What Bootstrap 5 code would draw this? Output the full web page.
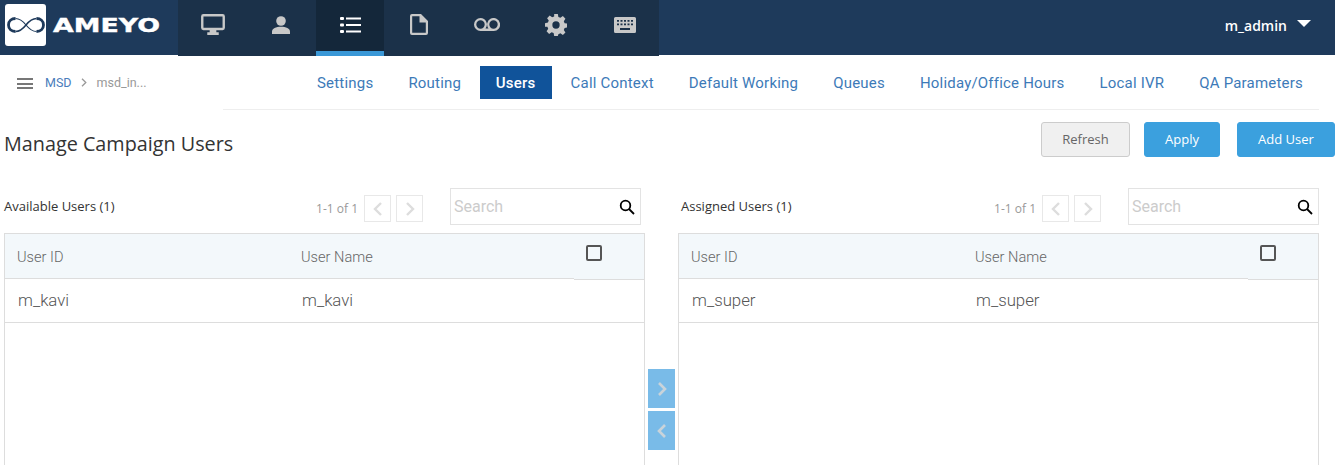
<!DOCTYPE html>
<html lang="en"><head><meta charset="utf-8"><title>Manage Campaign Users</title>
<link href="https://cdn.jsdelivr.net/npm/bootstrap@5.3.0/dist/css/bootstrap.min.css" rel="stylesheet">
<style>
html,body{height:465px;overflow:hidden;background:#fff}
body{font-family:"Open Sans",sans-serif;color:#333}
.topbar{height:55px;background:#1e3a5b;position:relative}
.brand-zone{width:178.3px;padding:4px 0 0 5px;gap:7px}
.logo-tile{width:41px;height:42px;background:#fff;border-radius:3px}
.logo-word{font:700 20px/1 "DejaVu Sans",sans-serif;color:#fff;transform:scaleX(1.34);transform-origin:0 50%;-webkit-text-stroke:.4px #fff;margin-top:-1px}
.icon-strip{height:56px;background:#1b3149;position:relative;z-index:2}
.strip-tab{width:68.71px;height:56px;padding-bottom:7px}
.strip-tab svg{fill:#c8c8c8}
.strip-on{background:#14273a;border-bottom:5px solid #3a98d7;padding-bottom:2px}
.strip-on svg{fill:#fff}
.who{margin-left:auto;padding-right:24px;color:#fff;font-size:14px;font-weight:600;gap:10px;padding-bottom:4px}
.who-caret{width:0;height:0;border:7px solid transparent;border-top:7px solid #fff;border-bottom:0;margin-bottom:5px}
.subbar{height:55px}
.crumbs{flex:0 0 223px;padding-left:17px;font:400 12.5px Roboto,sans-serif}
.crumb-burger{width:16px;height:11px;border-top:2px solid #777;border-bottom:2px solid #777;position:relative;margin-right:12px;margin-top:2px}
.crumb-burger::after{content:"";position:absolute;left:0;right:0;top:2.5px;height:2px;background:#777}
.crumb-a{color:#4a7dbb}.crumb-b{color:#999}
.crumb-sep{margin:0 10px 0 9px}
.tabline{flex:1;min-width:0;margin-right:16px;height:55px;border-bottom:1px solid #eee;padding:0 0 0 76.500px}
.tab-link{flex:none;font:400 15px Roboto,sans-serif;letter-spacing:.2px;color:#3d7ab8;padding:0 17.500px;height:33px;line-height:35px;text-decoration:none;white-space:nowrap}
.tab-link.tab-on{background:#10539a;color:#fff;font-weight:500;width:72px;text-align:center;padding:0;margin:0 1.500px 0 1px}
.headrow{height:78px;padding:12px 0 0 4px}
.page-title{font:400 19.800px "Open Sans",sans-serif;color:#333;margin:0;padding-top:8px}
.act{font:400 13px/1 "Open Sans",sans-serif;height:35px;padding:0;border-radius:3px}
.act-grey{width:89px;background:#f0f0f0;border:1px solid #ccc;color:#666;margin-right:14px}
.act-blue{background:#3ba0de;border:1px solid #3ba0de;color:#fff}
.act-apply{width:76px;margin-right:17px}.act-add{width:98px}
.work{padding-left:4px}
.pane-l{width:641px}.pane-r{width:641px}
.pane-mid{width:33px;padding:181px 0 0 3px}
.shift-btn{width:27px;height:39px;background:#79bbe8;margin-bottom:3px;border:0;padding:0;display:flex;align-items:center;justify-content:center}
.pane-top{height:45px;position:relative}
.pane-label{font-size:13px;color:#333;margin-top:9px;white-space:nowrap}
.label-right{padding-left:3px}
.pager{margin:7px 27px 0 auto}
.pager-count{font-size:12px;color:#999;margin-right:6px}
.page-box{width:27px;height:27px;border:1px solid #e8e8e8;background:#fff;padding:0;display:flex;align-items:center;justify-content:center}
.page-next{margin-left:5px}
.search-box{width:191px;height:37px;border:1px solid #e3e3e3;padding:0 4px 0 3px}
.search-box svg{margin-right:1px}
.search-left{margin-right:4px}
.search-box input{border:0;outline:0;flex:1;min-width:0;font:400 16px Roboto,sans-serif;padding:0;background:transparent}
.search-box input::placeholder{color:#ccc;opacity:1}
.grid-wrap{border:1px solid #ddd;border-bottom:0;height:300px}
.user-table{width:100%;table-layout:fixed;border-collapse:collapse;margin:0}
.user-table th{height:44px;background:#f3f8fb;font:300 14.600px Roboto,sans-serif;color:#666;padding:2px 0 0 12px;border-bottom:1px solid #ddd}
.user-table th:last-child{border-bottom-color:#f3f8fb}
.user-table td{height:44px;font:300 16.800px Roboto,sans-serif;color:#555;padding:0 0 0 13px;border-bottom:1px solid #ddd}
.user-table td:last-child{box-shadow:inset 0 1px 0 #ddd}
.box-mark{width:16px;height:16px;border:2px solid #555;border-radius:2px;display:block;margin:-7px 0 0 0}
</style></head>
<body>
<div class="topbar d-flex align-items-start">
  <div class="brand-zone d-flex">
    <div class="logo-tile d-flex align-items-center justify-content-center">
      <svg width="38" height="18" viewBox="0 0 38 18" fill="none" stroke="#1e3a5b"><path stroke-width="2.800" d="M8.500 2.500C4.500 2.500 1.500 5 1.500 9C1.500 13 4.500 15.500 8.500 15.500"/><path stroke-width="1.600" d="M8.500 15.500C12 15.500 15 14 19 9C23 4 26 2.500 29.500 2.500"/><path stroke-width="2.800" d="M29.500 2.500C33.500 2.500 36.500 5 36.500 9C36.500 13 33.500 15.500 29.500 15.500"/><path stroke-width="1.200" d="M29.500 15.500C26 15.500 23 14 19 9C15 4 12 2.500 8.500 2.500"/></svg>
    </div>
    <div class="logo-word align-self-center">AMEYO</div>
  </div>
  <div class="icon-strip d-flex">
    <div class="strip-tab d-flex align-items-center justify-content-center"><svg width="24" height="21" viewBox="0 0 25 22"><path fill-rule="evenodd" d="M2.500 0h20A2.500 2.500 0 0 1 25 2.500v12a2.500 2.500 0 0 1-2.500 2.500H16v2h2.500v3h-12v-3H9v-2H2.500A2.500 2.500 0 0 1 0 14.500v-12A2.500 2.500 0 0 1 2.500 0zM2.500 2.500v12h20v-12z"/></svg></div>
    <div class="strip-tab d-flex align-items-center justify-content-center"><svg width="18" height="18" viewBox="0 0 18 18"><circle cx="9" cy="5" r="4.800"/><path d="M0 18v-2.500C0 12.500 4 10.800 9 10.800s9 1.700 9 4.700V18z"/></svg></div>
    <div class="strip-tab strip-on d-flex align-items-center justify-content-center"><svg width="21" height="16" viewBox="0 0 21 16"><rect x="0" y="0" width="4" height="3" rx="1"/><rect x="0" y="6.500" width="4" height="3" rx="1"/><rect x="0" y="13" width="4" height="3" rx="1"/><rect x="6" y=".5" width="15" height="2"/><rect x="6" y="7" width="15" height="2"/><rect x="6" y="13.500" width="15" height="2"/></svg></div>
    <div class="strip-tab d-flex align-items-center justify-content-center"><svg width="18" height="21" viewBox="0 0 18 21"><path fill-rule="evenodd" d="M2 0h9l7 7v12a2 2 0 0 1-2 2H2a2 2 0 0 1-2-2V2a2 2 0 0 1 2-2zM2.200 2.200v16.600h13.600V8.500H9.500V2.200z"/></svg></div>
    <div class="strip-tab d-flex align-items-center justify-content-center"><svg width="26" height="13" viewBox="0 0 26 13"><path fill-rule="evenodd" d="M6.500 0a6.500 6.500 0 0 1 5 10.500h3A6.500 6.500 0 1 1 19.500 13h-13a6.500 6.500 0 0 1 0-13zM6.500 2.300a4.200 4.200 0 1 0 0 8.400 4.200 4.200 0 0 0 0-8.400zM19.500 2.300a4.200 4.200 0 1 0 0 8.400 4.200 4.200 0 0 0 0-8.400z"/></svg></div>
    <div class="strip-tab d-flex align-items-center justify-content-center"><svg width="22" height="22" viewBox="0 0 24 24"><path fill-rule="evenodd" d="M10 0h4l.6 3.200 2.200.9L19.500 2.300l2.800 2.800-1.800 2.700.9 2.200 3.200.6v4l-3.200.6-.9 2.200 1.800 2.700-2.800 2.800-2.700-1.800-2.200.9L14 24h-4l-.6-3.200-2.200-.9-2.700 1.800-2.800-2.800 1.800-2.700-.9-2.200L0 14v-4l3.200-.6.9-2.200L2.300 4.500 5.100 1.700l2.700 1.800 2.200-.9zM12 8a4 4 0 1 0 0 8 4 4 0 0 0 0-8z"/></svg></div>
    <div class="strip-tab d-flex align-items-center justify-content-center"><svg width="22" height="16" viewBox="0 0 22 16"><path fill-rule="evenodd" d="M1.500 0h19A1.500 1.500 0 0 1 22 1.500v13a1.500 1.500 0 0 1-1.500 1.500h-19A1.500 1.500 0 0 1 0 14.500v-13A1.500 1.500 0 0 1 1.500 0zM3 3v1.700h2V3zM6.500 3v1.700h2V3zM10 3v1.700h2V3zM13.500 3v1.700h2V3zM17 3v1.700h2V3zM3 6.500v1.700h2V6.500zM6.500 6.500v1.700h2V6.500zM10 6.500v1.700h2V6.500zM13.500 6.500v1.700h2V6.500zM17 6.500v1.700h2V6.500zM6 11v2h10v-2z"/></svg></div>
  </div>
  <div class="who d-flex align-items-center h-100"><span>m_admin</span><span class="who-caret"></span></div>
</div>

<div class="subbar d-flex">
  <div class="crumbs d-flex align-items-center">
    <span class="crumb-burger"></span><span class="crumb-a">MSD</span>
    <svg class="crumb-sep" width="6" height="9" viewBox="0 0 6 9" fill="none" stroke="#999" stroke-width="1.300"><path d="M1 .8 4.800 4.500 1 8.200"/></svg>
    <span class="crumb-b">msd_in...</span>
  </div>
  <div class="tabline d-flex align-items-center">
    <a class="tab-link" href="#">Settings</a>
    <a class="tab-link" href="#">Routing</a>
    <a class="tab-link tab-on" href="#">Users</a>
    <a class="tab-link" href="#">Call Context</a>
    <a class="tab-link" href="#">Default Working</a>
    <a class="tab-link" href="#">Queues</a>
    <a class="tab-link" href="#">Holiday/Office Hours</a>
    <a class="tab-link" href="#">Local IVR</a>
    <a class="tab-link" href="#">QA Parameters</a>
  </div>
</div>

<div class="headrow d-flex justify-content-between align-items-start">
  <h1 class="page-title">Manage Campaign Users</h1>
  <div class="d-flex">
    <button class="btn act act-grey">Refresh</button>
    <button class="btn act act-blue act-apply">Apply</button>
    <button class="btn act act-blue act-add">Add User</button>
  </div>
</div>

<div class="work d-flex">
  <div class="pane-l">
    <div class="pane-top d-flex align-items-start">
      <span class="pane-label">Available Users (1)</span>
      <div class="pager d-flex align-items-center">
        <span class="pager-count">1-1 of 1</span>
        <span class="page-box"><svg width="10" height="14" viewBox="0 0 10 14" fill="none" stroke="#ddd" stroke-width="2.400"><path d="M8 1 2 7l6 6"/></svg></span>
        <span class="page-box page-next"><svg width="10" height="14" viewBox="0 0 10 14" fill="none" stroke="#ddd" stroke-width="2.400"><path d="m2 1 6 6-6 6"/></svg></span>
      </div>
      <div class="search-box search-left d-flex align-items-center"><input type="text" placeholder="Search" aria-label="Search"><svg width="16" height="16" viewBox="0 0 16 16" fill="none" stroke="#000" stroke-width="1.800"><circle cx="6.500" cy="6.500" r="4.800"/><path d="m10 10 5 5"/></svg></div>
    </div>
    <div class="grid-wrap">
      <table class="user-table"><colgroup><col style="width:284px"><col style="width:285px"><col></colgroup>
        <thead><tr><th>User ID</th><th>User Name</th><th><span class="box-mark"></span></th></tr></thead>
        <tbody><tr><td>m_kavi</td><td>m_kavi</td><td></td></tr></tbody>
      </table>
    </div>
  </div>
  <div class="pane-mid">
    <button class="shift-btn" aria-label="Assign"><svg width="10" height="14" viewBox="0 0 10 14" fill="none" stroke="#c9d3da" stroke-width="2.600"><path d="m2 1 6 6-6 6"/></svg></button>
    <button class="shift-btn" aria-label="Remove"><svg width="10" height="14" viewBox="0 0 10 14" fill="none" stroke="#c9d3da" stroke-width="2.600"><path d="M8 1 2 7l6 6"/></svg></button>
  </div>
  <div class="pane-r">
    <div class="pane-top d-flex align-items-start">
      <span class="pane-label label-right">Assigned Users (1)</span>
      <div class="pager d-flex align-items-center">
        <span class="pager-count">1-1 of 1</span>
        <span class="page-box"><svg width="10" height="14" viewBox="0 0 10 14" fill="none" stroke="#ddd" stroke-width="2.400"><path d="M8 1 2 7l6 6"/></svg></span>
        <span class="page-box page-next"><svg width="10" height="14" viewBox="0 0 10 14" fill="none" stroke="#ddd" stroke-width="2.400"><path d="m2 1 6 6-6 6"/></svg></span>
      </div>
      <div class="search-box d-flex align-items-center"><input type="text" placeholder="Search" aria-label="Search"><svg width="16" height="16" viewBox="0 0 16 16" fill="none" stroke="#000" stroke-width="1.800"><circle cx="6.500" cy="6.500" r="4.800"/><path d="m10 10 5 5"/></svg></div>
    </div>
    <div class="grid-wrap">
      <table class="user-table"><colgroup><col style="width:284px"><col style="width:285px"><col></colgroup>
        <thead><tr><th>User ID</th><th>User Name</th><th><span class="box-mark"></span></th></tr></thead>
        <tbody><tr><td>m_super</td><td>m_super</td><td></td></tr></tbody>
      </table>
    </div>
  </div>
</div>
</body></html>
